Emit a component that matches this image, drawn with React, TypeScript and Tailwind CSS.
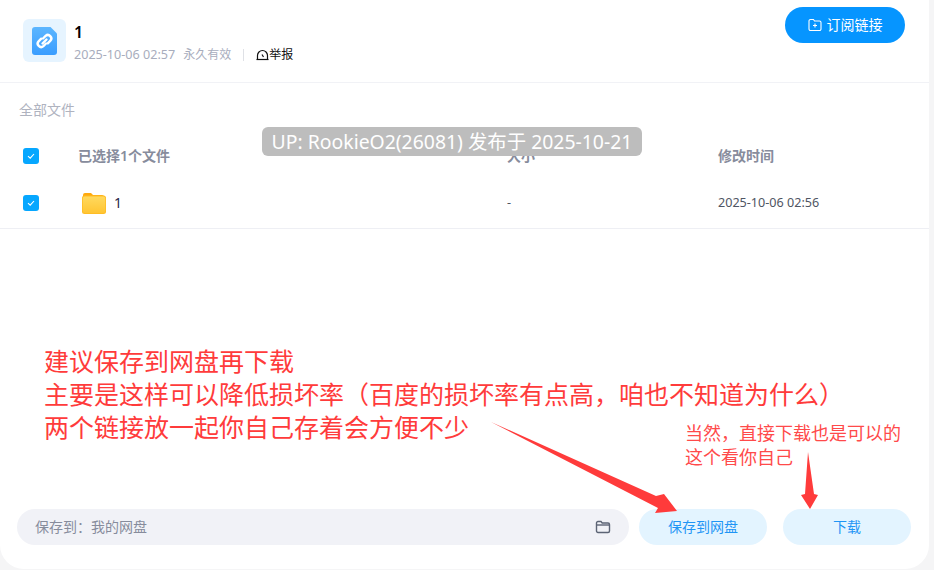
import React from "react";

const sans = "font-['Noto_Sans','Noto_Sans_CJK_SC',sans-serif]";

const Check = () => (
  <span className="flex h-4 w-4 shrink-0 items-center justify-center rounded-[3px] bg-[#06a7ff]">
    <svg width="10" height="10" viewBox="0 0 10 10" fill="none" stroke="#fff" strokeWidth="1.1">
      <path d="M2 5.2 4.2 7.2 8 3" />
    </svg>
  </span>
);

const LinkFile = () => (
  <div className="flex h-[43px] w-[43px] items-center justify-center rounded-md bg-[#e6f4ff]">
    <svg width="25" height="28" viewBox="0 0 25 28" fill="none">
      <defs>
        <linearGradient id="file" x1="0" y1="0" x2="0" y2="1">
          <stop offset="0" stopColor="#5cb6ff" />
          <stop offset="1" stopColor="#3a9dff" />
        </linearGradient>
      </defs>
      <path d="M3 0h15.500L25 6.500V25a3 3 0 0 1-3 3H3a3 3 0 0 1-3-3V3a3 3 0 0 1 3-3Z" fill="url(#file)" />
      <g stroke="#fff" strokeWidth="2.4" strokeLinecap="round">
        <path d="M11 11.500l2.600-2.600a3.400 3.400 0 0 1 4.800 4.800l-2.600 2.600" />
        <path d="M14 16.500l-2.600 2.600a3.400 3.400 0 0 1-4.800-4.800l2.600-2.600" />
        <path d="M10.500 16.500l4-4" />
      </g>
    </svg>
  </div>
);

const Folder = () => (
  <svg width="24" height="22" viewBox="0 0 24 22" fill="none">
    <defs>
      <linearGradient id="folder" x1="0" y1="0" x2="0" y2="1">
        <stop offset="0" stopColor="#ffd95e" />
        <stop offset="1" stopColor="#ffc533" />
      </linearGradient>
    </defs>
    <path d="M1 3a2 2 0 0 1 2-2h6l2 2h9a2 2 0 0 1 2 2v4H1Z" fill="#ffa90d" />
    <rect x="0" y="3.500" width="24" height="18.500" rx="2.500" fill="#ffbd24" />
    <rect x="0.800" y="4.500" width="22.400" height="16.500" rx="2" fill="url(#folder)" />
  </svg>
);

export default function App() {
  return (
    <div className={`relative h-[570px] w-[934px] overflow-hidden bg-[#f5f5f6] ${sans}`}>
      <div className="flex h-[569px] w-[929px] flex-col rounded-b-[24px] bg-white">
        <header className="flex h-[83px] shrink-0 items-start justify-between border-b border-[#f1f2f6] pl-[23px] pr-6">
          <div className="flex gap-2 pt-[19px]">
            <LinkFile />
            <div>
              <div className="h-[26px] pt-[1px] text-base leading-6 font-semibold text-black">1</div>
              <div className="flex items-center text-xs leading-5 text-[#a8adbd]">
                <span className="text-[12.600px]">2025-10-06 02:57</span>
                <span className="ml-2">永久有效</span>
                <span className="mx-[12px] h-3 w-px bg-[#dfe1e6]" />
                <svg width="13" height="13" viewBox="0 0 13 13" fill="none" stroke="#111" strokeWidth="1.2">
                  <path d="M1.500 10.500V6.500a5 5 0 0 1 10 0v4Z" />
                  <path d="M6 5.500 7.500 8" />
                  <path d="M.5 10.500h12" />
                </svg>
                <span className="text-[#111]">举报</span>
              </div>
            </div>
          </div>
          <button className="mt-[7px] flex h-9 w-[120px] items-center justify-center gap-[5px] rounded-full bg-[#0695ff] text-sm text-white">
            <svg width="14" height="14" viewBox="0 0 14 14" fill="none" stroke="#fff" strokeWidth="1.1">
              <path d="M1 3a1.500 1.500 0 0 1 1.500-1.500h3l1 1.500h5A1.500 1.500 0 0 1 13 4.500v6.500a1.500 1.500 0 0 1-1.500 1.500h-9A1.500 1.500 0 0 1 1 11Z" />
              <path d="M7 5.500v4M5 7.500h4" />
            </svg>
            订阅链接
          </button>
        </header>

        <div className="pt-[17px] pl-[19px] text-sm leading-5 text-[#afb3bf]">全部文件</div>

        <div className="mt-[13px] flex h-[45px] items-center pl-[23px] text-sm font-semibold text-[#878c9c]">
          <Check />
          <span className="ml-[39px] w-[429px]">已选择1个文件</span>
          <span className="w-[211px]">大小</span>
          <span>修改时间</span>
        </div>

        <div className="flex h-[51px] items-center border-b border-[#eeeff4] pl-[23px] text-[12.600px] text-[#4f5563]">
          <Check />
          <span className="ml-[43px]">
            <Folder />
          </span>
          <span className="ml-2 w-[393px] text-sm text-[#2a2446]">1</span>
          <span className="w-[211px]">-</span>
          <span>2025-10-06 02:56</span>
        </div>

        <div className="mt-auto mb-[24px] flex items-center pl-[17px]">
          <div className="flex h-9 w-[612px] items-center justify-between rounded-full bg-[#f1f2f7] px-[18px] text-sm text-[#878c9c]">
            <span>保存到：我的网盘</span>
            <svg width="16" height="16" viewBox="0 0 16 16" fill="none" stroke="#5c6475" strokeWidth="1.4">
              <path d="M1.500 4a1.500 1.500 0 0 1 1.500-1.500h3l1.200 1.500H13a1.500 1.500 0 0 1 1.500 1.500V12a1.500 1.500 0 0 1-1.500 1.500H3A1.500 1.500 0 0 1 1.500 12Z" />
              <path d="M1.500 6h13" />
            </svg>
          </div>
          <button className="ml-[10px] h-9 w-[128px] rounded-full bg-[#e3f4ff] text-sm text-[#1f95f5]">保存到网盘</button>
          <button className="ml-4 h-9 w-[128px] rounded-full bg-[#e3f4ff] text-sm text-[#1f95f5]">下载</button>
        </div>
      </div>

      <div className="absolute top-[127px] left-[262px] flex h-[29px] w-[380px] items-center justify-center rounded-md bg-[#bdbdbd] text-[19.400px] whitespace-nowrap text-white">
        UP: RookieO2(26081) 发布于 2025-10-21
      </div>

      <div className="absolute top-[345px] left-[44px] text-[25px] leading-[33px] whitespace-nowrap text-[#ff3b3b]">
        <div>建议保存到网盘再下载</div>
        <div>主要是这样可以降低损坏率（百度的损坏率有点高，咱也不知道为什么）</div>
        <div>两个链接放一起你自己存着会方便不少</div>
      </div>

      <div className="absolute top-[421px] left-[685px] text-lg leading-6 whitespace-nowrap text-[#ff4a4a]">
        <div>当然，直接下载也是可以的</div>
        <div>这个看你自己</div>
      </div>

      <svg className="absolute top-0 left-0" width="934" height="570" fill="#ff3b3b">
        <polygon points="491,422 656,496 664,494 677,511 655,513 658,508" />
        <polygon points="808,452 805,494 801,495 810,509 818,495 814,494" />
      </svg>
    </div>
  );
}
